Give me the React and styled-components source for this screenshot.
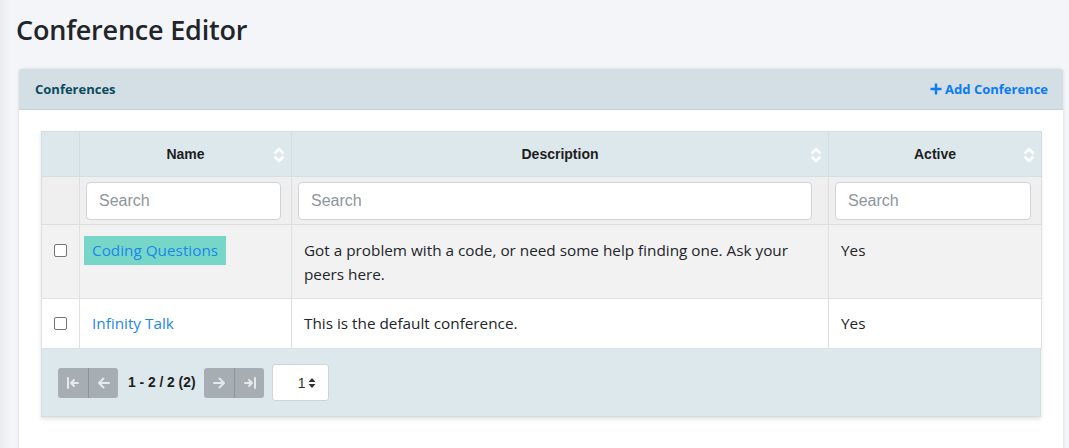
import React from 'react';
import styled, { createGlobalStyle } from 'styled-components';

const GlobalStyle = createGlobalStyle`
  html, body {
    margin: 0;
    padding: 0;
    background: #f4f5f9;
    font-family: "Open Sans", "Noto Sans", sans-serif;
  }
`;

const Page = styled.div`
  min-height: 448px;
  padding: 11px 6px 0 19px;
  box-sizing: border-box;
  background: linear-gradient(to right, #e9eaee 0, #f4f5f9 10px);
`;

const Title = styled.h1`
  margin: 0 0 20px -3px;
  font-size: 27px;
  font-weight: 600;
  color: #212529;
  line-height: 38px;
  letter-spacing: -0.2px;
`;

const Card = styled.div`
  background: #fff;
  border-radius: 3px 3px 0 0;
  box-shadow: 0 0 3px rgba(0, 0, 0, 0.15);
`;

const CardHeader = styled.div`
  display: flex;
  align-items: center;
  justify-content: space-between;
  height: 40px;
  padding: 0 15px 0 16px;
  background: #d3dfe4;
  border-bottom: 1px solid #c5d2d8;
  border-radius: 3px 3px 0 0;
`;

const CardTitle = styled.span`
  font-size: 13px;
  font-weight: 700;
  color: #0b4b5e;
`;

const AddLink = styled.a`
  display: flex;
  align-items: center;
  gap: 3px;
  font-size: 13px;
  font-weight: 700;
  color: #0a7bf5;
  text-decoration: none;
`;

const CardBody = styled.div`
  padding: 21px 22px 48px 22px;
`;

const TableWrap = styled.div`
  box-shadow: 0 2px 4px rgba(0, 0, 0, 0.12);
`;

const Table = styled.table`
  width: 100%;
  border-collapse: collapse;
  table-layout: fixed;
  color: #212529;
`;

const HeadCell = styled.th`
  position: relative;
  height: 44px;
  padding: 0;
  background: #dde8ec;
  border: 1px solid #d5dfe3;
  font-family: "Liberation Sans", Arial, sans-serif;
  font-size: 14px;
  font-weight: 700;
  color: #1d1d1d;
  text-align: center;
`;

const SortIcon = styled.svg`
  position: absolute;
  right: 6px;
  top: 15px;
`;

const FilterCell = styled.td`
  height: 47px;
  padding: 0 ${(p) => (p.$wide ? '16px' : '10px')} 0 6px;
  background: #efefef;
  border: 1px solid #dedede;
`;

const SearchInput = styled.input`
  display: block;
  box-sizing: border-box;
  width: 100%;
  height: 38px;
  padding: 0 12px;
  border: 1px solid #cfd4d9;
  border-radius: 4px;
  font-family: "Liberation Sans", Arial, sans-serif;
  font-size: 16px;
  color: #495057;
  background: #fff;
  &::placeholder {
    color: #8e959c;
  }
`;

const Cell = styled.td`
  padding: ${(p) => (p.$striped ? '13px 12px 12px' : '12px')};
  vertical-align: top;
  border: 1px solid #dfe2e5;
  background: ${(p) => (p.$striped ? '#f2f2f2' : '#fff')};
  line-height: 24px;
  font-size: 15.3px;
`;

const CheckCell = styled(Cell)`
  text-align: center;
  padding-left: 0;
  padding-right: 0;
`;

const Check = styled.span`
  display: inline-block;
  width: 11px;
  height: 11px;
  margin-top: 6px;
  border: 1px solid #767676;
  border-radius: 2px;
  background: #fff;
`;

const NameLink = styled.a`
  margin-left: -8px;
  padding: 4px 8px 5px;
  color: #1e86e8;
  text-decoration: none;
  background: ${(p) => (p.$highlight ? '#76d7c8' : 'transparent')};
`;

const Footer = styled.div`
  display: flex;
  align-items: center;
  height: 67px;
  padding: 0 16px;
  background: #dde8ec;
  border: 1px solid #d5dfe3;
  border-top: none;
`;

const BtnGroup = styled.div`
  display: flex;
  border-radius: 3px;
  overflow: hidden;
`;

const PageBtn = styled.button`
  display: flex;
  align-items: center;
  justify-content: center;
  width: 30px;
  height: 30px;
  padding: 0;
  border: none;
  background: #a6aeb4;
  & + & {
    border-left: 1px solid #8d959b;
  }
`;

const Range = styled.span`
  margin: 0 9px 0 10px;
  font-family: "Liberation Sans", Arial, sans-serif;
  font-size: 13.8px;
  font-weight: 700;
  color: #1d1d1d;
`;

const PageSelect = styled.div`
  display: flex;
  align-items: center;
  justify-content: flex-end;
  gap: 3px;
  box-sizing: border-box;
  width: 57px;
  height: 37px;
  margin-left: 8px;
  padding-right: 12px;
  background: #fff;
  border: 1px solid #cfd4d9;
  border-radius: 3px;
  font-family: "Liberation Sans", Arial, sans-serif;
  font-size: 14px;
  color: #333;
`;

const Sort = () => (
  <SortIcon width="12" height="16" viewBox="0 0 12 16">
    <path d="M1.5 6.5 L6 2 L10.5 6.5" fill="none" stroke="#fff" strokeWidth="2.6" />
    <path d="M1.5 9.5 L6 14 L10.5 9.5" fill="none" stroke="#fff" strokeWidth="2.6" />
  </SortIcon>
);

const Arrow = ({ d }) => (
  <svg width="16" height="16" viewBox="0 0 16 16">
    <path d={d} fill="none" stroke="#e6e9eb" strokeWidth="2" strokeLinecap="round" strokeLinejoin="round" />
  </svg>
);

const rows = [
  {
    name: 'Coding Questions',
    description: 'Got a problem with a code, or need some help finding one. Ask your peers here.',
    active: 'Yes',
    highlight: true,
  },
  {
    name: 'Infinity Talk',
    description: 'This is the default conference.',
    active: 'Yes',
  },
];

export default function App() {
  return (
    <>
      <GlobalStyle />
      <Page>
        <Title>Conference Editor</Title>
        <Card>
          <CardHeader>
            <CardTitle>Conferences</CardTitle>
            <AddLink href="#">
              <svg width="12" height="12" viewBox="0 0 12 12">
                <path d="M6 0.5 V11.5 M0.5 6 H11.5" stroke="#0a7bf5" strokeWidth="2.4" />
              </svg>
              Add Conference
            </AddLink>
          </CardHeader>
          <CardBody>
            <TableWrap>
              <Table>
                <colgroup>
                  <col style={{ width: 38 }} />
                  <col style={{ width: 212 }} />
                  <col style={{ width: 537 }} />
                  <col style={{ width: 213 }} />
                </colgroup>
                <thead>
                  <tr>
                    <HeadCell />
                    <HeadCell>Name<Sort /></HeadCell>
                    <HeadCell>Description<Sort /></HeadCell>
                    <HeadCell>Active<Sort /></HeadCell>
                  </tr>
                  <tr>
                    <FilterCell />
                    <FilterCell><SearchInput placeholder="Search" /></FilterCell>
                    <FilterCell $wide><SearchInput placeholder="Search" /></FilterCell>
                    <FilterCell><SearchInput placeholder="Search" /></FilterCell>
                  </tr>
                </thead>
                <tbody>
                  {rows.map((r, i) => (
                    <tr key={r.name}>
                      <CheckCell $striped={i % 2 === 0}><Check /></CheckCell>
                      <Cell $striped={i % 2 === 0}>
                        <NameLink href="#" $highlight={r.highlight}>{r.name}</NameLink>
                      </Cell>
                      <Cell $striped={i % 2 === 0}>{r.description}</Cell>
                      <Cell $striped={i % 2 === 0}>{r.active}</Cell>
                    </tr>
                  ))}
                </tbody>
              </Table>
              <Footer>
                <BtnGroup>
                  <PageBtn><Arrow d="M3 3 V13 M13 8 H6 M9 5 L6 8 L9 11" /></PageBtn>
                  <PageBtn><Arrow d="M13 8 H3 M7.5 3.5 L3 8 L7.5 12.5" /></PageBtn>
                </BtnGroup>
                <Range>1 - 2 / 2 (2)</Range>
                <BtnGroup>
                  <PageBtn><Arrow d="M3 8 H13 M8.5 3.5 L13 8 L8.5 12.5" /></PageBtn>
                  <PageBtn><Arrow d="M13 3 V13 M3 8 H10 M7 5 L10 8 L7 11" /></PageBtn>
                </BtnGroup>
                <PageSelect>
                  1
                  <svg width="8" height="12" viewBox="0 0 8 12">
                    <path d="M0.5 5 L4 1 L7.5 5 Z M0.5 7 L4 11 L7.5 7 Z" fill="#333" />
                  </svg>
                </PageSelect>
              </Footer>
            </TableWrap>
          </CardBody>
        </Card>
      </Page>
    </>
  );
}
